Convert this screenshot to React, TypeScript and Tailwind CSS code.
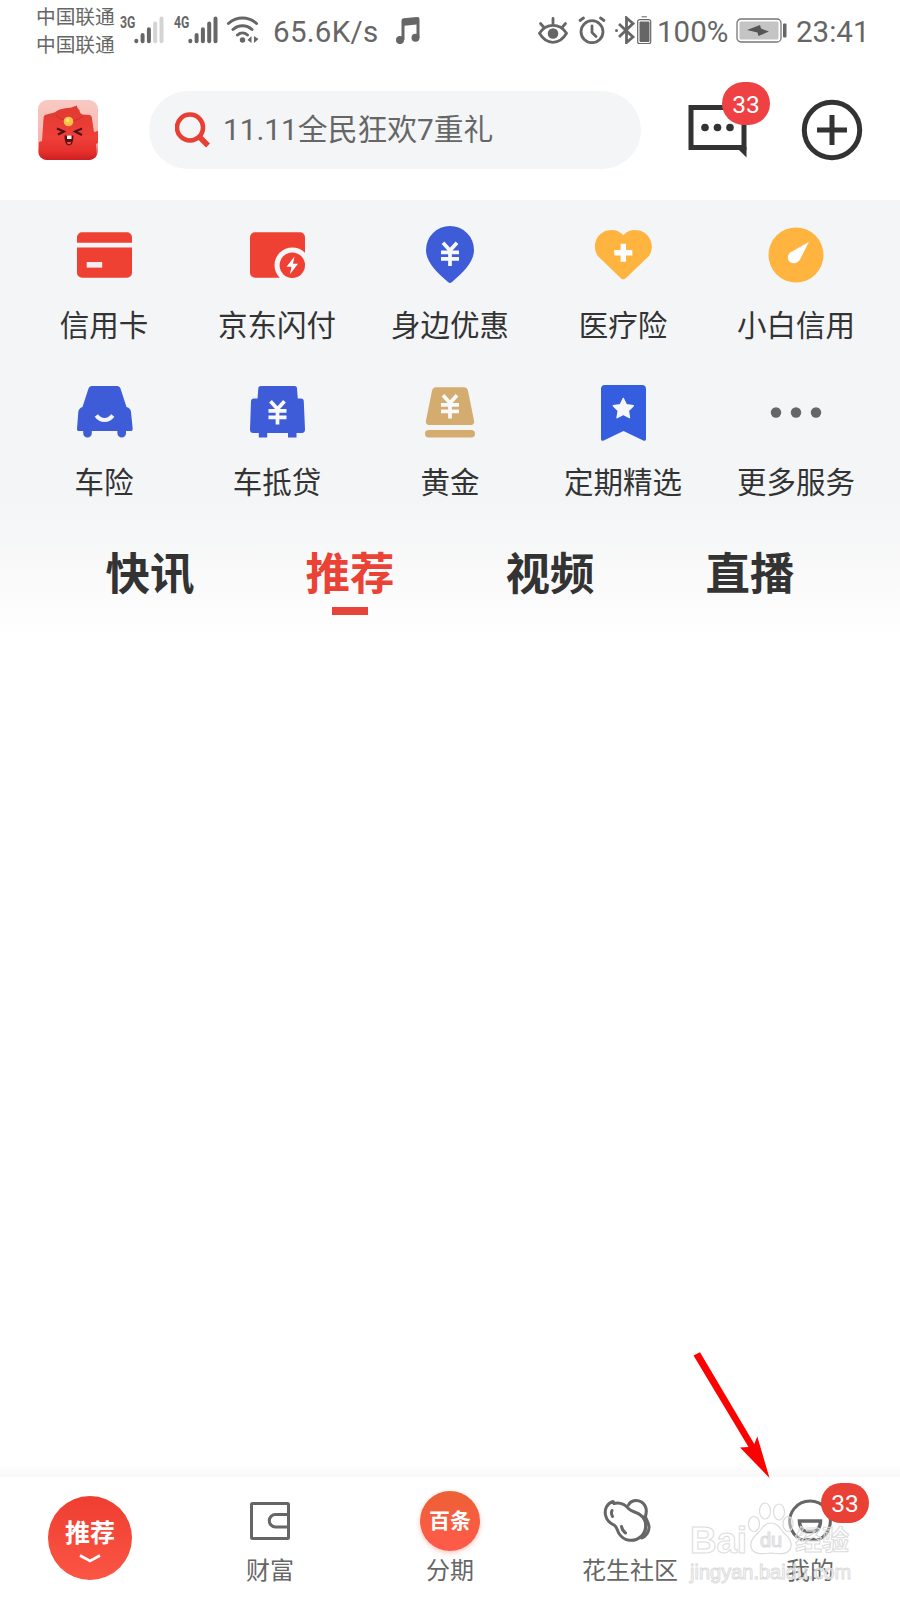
import type { ReactNode } from 'react';

interface ServiceItem {
  label: string;
  icon: ReactNode;
}

function Yen({ x, y }: { x: number; y: number }) {
  return (
    <g transform={`translate(${x} ${y})`} stroke="#f8f9fd" strokeWidth="3.7" fill="none">
      <path d="M2 1.2 9 9 16 1.2M0 10.8h18M0 17.3h18M9 9v15.500" />
    </g>
  );
}

function IconBox({ children }: { children: ReactNode }) {
  return (
    <svg viewBox="0 0 60 60" className="block h-[60px] w-[60px] shrink-0">
      {children}
    </svg>
  );
}

const SERVICES: ServiceItem[] = [
  {
    label: '信用卡',
    icon: (
      <IconBox>
        <path d="M3 17.7V12a5 5 0 0 1 5-4.7h45a5 5 0 0 1 5 4.7v5.7zM3 22.5h55v25.3a5 5 0 0 1-5 5H8a5 5 0 0 1-5-5z" fill="#ef4034" />
        <rect x="12.7" y="37" width="15.5" height="5.6" fill="#f5eeee" />
      </IconBox>
    ),
  },
  {
    label: '京东闪付',
    icon: (
      <IconBox>
        <path d="M8 7.3h45a5 5 0 0 1 5 5v15.400A17.600 17.600 0 0 0 32.700 52.800H8a5 5 0 0 1-5-5V12.300a5 5 0 0 1 5-5z" fill="#ef4034" />
        <circle cx="45.3" cy="40.200" r="12.700" fill="#ef4034" />
        <path d="M47.500 31.500 39.500 41.800h5l-1.500 7.500 8-10.600h-5z" fill="#fff" />
      </IconBox>
    ),
  },
  {
    label: '身边优惠',
    icon: (
      <IconBox>
        <path d="M30 1a24 24 0 0 1 24 24c0 11-9 21-22.300 32.300a2.500 2.500 0 0 1-3.400 0C15 46 6 36 6 25A24 24 0 0 1 30 1z" fill="#3e5bd8" />
        <Yen x={21} y={16.500} />
      </IconBox>
    ),
  },
  {
    label: '医疗险',
    icon: (
      <IconBox>
        <path d="M30.300 10.300C35 4.600 44 3.500 51 7.500c8 5 10.300 15.500 5 23.500L33 53a4 4 0 0 1-5.400 0L4.800 31C-.5 23 1.600 12.500 9.600 7.500c7-4 16-2.900 20.700 2.800z" fill="#ffb440" />
        <path d="M30.300 18.700v18M21.300 27.700h18" stroke="#fff" strokeWidth="5.400" />
      </IconBox>
    ),
  },
  {
    label: '小白信用',
    icon: (
      <IconBox>
        <circle cx="30" cy="30" r="27.500" fill="#ffb440" />
        <path d="M42.800 17 34 34.500c-2 3.500-6.500 5-9.800 2.700-3.200-2.500-3.200-7 0-9.700z" fill="#fff" />
      </IconBox>
    ),
  },
  {
    label: '车险',
    icon: (
      <IconBox>
        <path d="M18 4h25c1.700 0 2.900 1 3.500 2.600L52.500 25c3 1 4.300 2.500 4.500 5l1.700 16.800c0 1.500-.8 2.300-2.200 2.300H52v2.200a4.200 4.200 0 0 1-8.600 0v-2.200H17.800v2.200a4.200 4.200 0 0 1-8.600 0v-2.200H5c-1.400 0-2.100-.8-2-2.300L4.300 30c.2-2.500 1.700-4 4.200-5l6-18.400C15.100 5 16.300 4 18 4z" fill="#3e5bd8" />
        <path d="M22.300 33.500c4.500 6 12 6 16.500 0" fill="none" stroke="#f4f6fb" strokeWidth="4" />
      </IconBox>
    ),
  },
  {
    label: '车抵贷',
    icon: (
      <IconBox>
        <path d="M13.800 4h33.700a2.500 2.500 0 0 1 2.500 2.500l.8 10h3a3 3 0 0 1 3 3L58 47.500a3.500 3.500 0 0 1-3.500 3.500H49.500v4.600H41V51H20.200v4.600h-8.400V51H6.600A3.500 3.500 0 0 1 3 47.500l1-28a3 3 0 0 1 3-3h3.500l.8-10A2.500 2.500 0 0 1 13.800 4z" fill="#3e5bd8" />
        <Yen x={21.500} y={18} />
      </IconBox>
    ),
  },
  {
    label: '黄金',
    icon: (
      <IconBox>
        <path d="M16.500 5.300h27c2.700 0 4 1.300 4.600 4L54 38.500c.6 3-.9 4.600-3.800 4.600H9.800C6.900 43.100 5.400 41.500 6 38.500L11.900 9.300c.6-2.700 1.900-4 4.600-4z" fill="#d5ac70" />
        <rect x="5" y="48" width="50" height="7.500" rx="3.750" fill="#d5ac70" />
        <Yen x={21} y={12} />
      </IconBox>
    ),
  },
  {
    label: '定期精选',
    icon: (
      <IconBox>
        <path d="M12 3h37a4 4 0 0 1 4 4v50c0 1.500-1.200 2.200-2.700 1.500L30.500 49 10.700 58.500C9.200 59.200 8 58.500 8 57V7a4 4 0 0 1 4-4z" fill="#345ddf" />
        <path d="m30.300 16.500 3 6.300 7 1-5 4.800 1.200 7-6.200-3.300-6.200 3.300 1.200-7-5-4.800 7-1z" fill="#f5f7fc" stroke="#f5f7fc" strokeWidth="1.500" strokeLinejoin="round" />
      </IconBox>
    ),
  },
  {
    label: '更多服务',
    icon: (
      <IconBox>
        <g fill="#666">
          <circle cx="10" cy="30.500" r="5.200" />
          <circle cx="30" cy="30.500" r="5.200" />
          <circle cx="50" cy="30.500" r="5.200" />
        </g>
      </IconBox>
    ),
  },
];

const TABS = ['快讯', '推荐', '视频', '直播'];

function Signal({ label, weak }: { label: string; weak?: boolean }) {
  const faded = weak ? '#d4d4d4' : '#666';
  return (
    <div className="flex h-7 w-[45px]">
      <span className="w-[14px] origin-left scale-x-[0.72] font-['Roboto',sans-serif] text-[17px] leading-[13px] font-bold">{label}</span>
      <svg viewBox="0 0 30 28" className="h-7 w-[30px] shrink-0" strokeWidth="4" strokeLinecap="round">
        <path d="M2.300 24.800v.4M8.600 19v6.200M14.900 13.200v12" stroke="#666" />
        <path d="M21.200 7.500v17.700M27.500 2.500v22.700" stroke={faded} />
      </svg>
    </div>
  );
}

function StatusBar() {
  return (
    <div className="flex h-16 items-start pl-9 pr-[31px] text-[#666]">
      <div className="w-[84px] pt-[4px] text-[19.700px] leading-[27.500px] whitespace-nowrap">
        <div>中国联通</div>
        <div>中国联通</div>
      </div>
      <div className="flex pt-[16px]">
        <Signal label="3G" weak />
        <div className="ml-[9px]">
          <Signal label="4G" />
        </div>
        <svg viewBox="0 0 34 28" className="ml-[7px] h-7 w-[34px]" fill="none" stroke="#666" strokeWidth="3" strokeLinecap="round">
          <path d="M2.500 7.500C10.500.300 22.500.300 30.500 7.500M7 13.500c5.500-5 13.500-5 19 0M11.500 19c3-2.700 7-2.700 10 0" />
          <circle cx="16.500" cy="24" r="2.700" fill="#666" stroke="none" />
          <path d="M25.500 20v7l-4-3zM28 20v7l4.500-4z" fill="#666" stroke="none" />
        </svg>
      </div>
      <span className="ml-[13px] font-['Roboto',sans-serif] text-[29.500px] leading-[64px] tracking-[0.300px]">65.6K/s</span>
      <svg viewBox="0 0 26 28" className="mt-[16px] ml-[16px] h-7 w-[26px]" fill="#666">
        <path d="M6.500 4.500q0-2 2-2.200L22 1q2.500-.2 2.500 2v19h-3V8.500L9.500 9.800V24h-3z" />
        <circle cx="5" cy="24" r="4" />
        <circle cx="20.500" cy="21.800" r="4" />
      </svg>

      <div className="ml-auto flex">
        <svg viewBox="0 0 30 28" className="mt-[16px] h-7 w-[30px]" fill="none" stroke="#666" strokeWidth="2.800" strokeLinecap="round">
          <path d="M1.500 17.300c7-10.500 20-10.500 27 0-7 12-20 12-27 0z" />
          <circle cx="15" cy="17.500" r="5.300" fill="#666" stroke="none" />
          <path d="M15 2.500v5M2.500 7.500l3.500 4M27.500 7.500l-3.500 4" />
        </svg>
        <svg viewBox="0 0 28 28" className="mt-[16px] ml-[10px] h-7 w-7" fill="none" stroke="#666" strokeWidth="2.800" strokeLinecap="round">
          <circle cx="14" cy="15.700" r="11" />
          <path d="M14 10v6.500l4 4M2 4.500 5.500 2M26 4.500 22.500 2" />
        </svg>
        <svg viewBox="0 0 37 28" className="mt-[16px] ml-[9px] h-7 w-[37px]">
          <path d="m4 8 14 13-6.500 5.500V2L18 7.500 4 21" fill="none" stroke="#666" strokeWidth="2.800" />
          <circle cx="1.500" cy="14.500" r="1.500" fill="#666" />
          <rect x="22.700" y="3.700" width="13" height="24" rx="2" fill="none" stroke="#666" strokeWidth="1.200" />
          <path d="M26.500.8h5.500M25 6h9v19.500h-9z" fill="#666" stroke="#666" strokeWidth="1" />
        </svg>
        <span className="ml-[5px] w-[74px] font-['Roboto',sans-serif] text-[29.500px] leading-[64px]">100%</span>
        <svg viewBox="0 0 52 26" className="mt-[18px] ml-[5px] h-[26px] w-[52px]">
          <rect x="1" y="1" width="44" height="23" rx="4" fill="#fff" stroke="#777" strokeWidth="1.300" />
          <rect x="3.500" y="3.500" width="39" height="18" rx="1.500" fill="#c4c4c4" />
          <rect x="47" y="5.500" width="3.500" height="14" rx="1" fill="#666" />
          <path d="M11 12 24 7l1 3.500 8 3L22.500 18l-1-3.500z" fill="#555" />
        </svg>
        <span className="ml-[8px] w-[73px] font-['Roboto',sans-serif] text-[29.500px] leading-[64px]">23:41</span>
      </div>
    </div>
  );
}

function Avatar() {
  return (
    <svg viewBox="0 0 60 60" className="h-[60px] w-[60px] rounded-[9px]">
      <defs>
        <linearGradient id="avatarBg" x1="0" y1="0" x2="0" y2="1">
          <stop offset="0" stopColor="#f9c9c3" />
          <stop offset="0.700" stopColor="#f6b5af" />
          <stop offset="1" stopColor="#dc4a46" />
        </linearGradient>
        <linearGradient id="avatarBody" x1="0" y1="0" x2="0" y2="1">
          <stop offset="0" stopColor="#e03a31" />
          <stop offset="0.600" stopColor="#ee3f38" />
          <stop offset="0.850" stopColor="#e6302c" />
          <stop offset="1" stopColor="#cb1e22" />
        </linearGradient>
      </defs>
      <rect width="60" height="60" fill="url(#avatarBg)" />
      <path d="M1 60V42l3-1 1.500-22c0-3 1-4 3-4.500l8-2c5-4 12-4.500 17-5l5.500-2c0 2 .5 3 2.500 4.500 0 2 1 3.500 3 4.500l7 .5c2 .5 2.500 2 2.500 4L56 32l4-1v12l-2 1 1 16z" fill="url(#avatarBody)" />
      <path d="M18 15c5 7 20 8 27 1" fill="none" stroke="#c9302a" strokeWidth="1" />
      <circle cx="30.500" cy="21.500" r="4.800" fill="#ffc247" />
      <circle cx="29.500" cy="20" r="2" fill="#ffe07a" />
      <path d="m19 28.500 7 3-6 3M44 28.500l-7 3 7 3.500" fill="none" stroke="#4c1018" strokeWidth="2" />
      <path d="M26.500 35.500h9c0 6-1.500 10-4.500 10s-4.500-4-4.500-10z" fill="#5b1118" />
      <path d="M29 35.500h4.500v3.500H29z" fill="#fff" />
      <path d="M29 42h4c0 3-4 3-4 0z" fill="#ef5a3f" />
    </svg>
  );
}

function Header() {
  return (
    <header className="flex h-[136px] items-start pl-[37.500px]">
      <div className="pt-[36px]">
        <Avatar />
      </div>
      <div className="mt-[27px] ml-[51.500px] flex h-[78px] w-[492px] items-center rounded-full bg-[#f3f5f7] pl-[26px]">
        <svg viewBox="0 0 36 36" className="h-9 w-9 shrink-0" fill="none" stroke="#e83f35">
          <circle cx="15" cy="15.500" r="13" strokeWidth="4.600" />
          <path d="m24.500 25 8.500 8.500" strokeWidth="5.500" />
        </svg>
        <span className="ml-[12px] text-[29.800px] leading-[40px] whitespace-nowrap text-[#666]">11.11全民狂欢7重礼</span>
      </div>
      <div className="relative mt-[41px] ml-[47px] h-[54px] w-[60px]">
        <svg viewBox="0 0 60 54" className="h-[54px] w-[60px]">
          <path d="M3 2.500h53v40H3z" fill="none" stroke="#333" strokeWidth="5" />
          <path d="M48 42h10.500v10.500z" fill="#333" />
          <g fill="#333">
            <circle cx="17" cy="22.500" r="3.800" />
            <circle cx="29.500" cy="22.500" r="3.800" />
            <circle cx="42" cy="22.500" r="3.800" />
          </g>
        </svg>
        <span className="absolute -top-[23px] left-[34px] h-[43px] w-[48px] rounded-[22px] bg-[#ef4044] text-center font-['Roboto',sans-serif] text-[24.500px] leading-[45px] text-white">33</span>
      </div>
      <svg viewBox="0 0 62 62" className="mt-[35px] ml-[53px] h-[62px] w-[62px]" fill="none" stroke="#333" strokeWidth="5">
        <circle cx="31" cy="31" r="27.700" />
        <path d="M31 16v30M16 31h30" />
      </svg>
    </header>
  );
}

function Services() {
  return (
    <section className="grid h-[302px] grid-cols-[repeat(5,173px)] grid-rows-[121px_121px] content-start justify-center gap-y-[36px] bg-[#f3f5f7] pt-[25px]">
      {SERVICES.map(({ label, icon }) => (
        <div key={label} className="flex flex-col items-center gap-[21px]">
          {icon}
          <span className="text-[29.500px] leading-[40px] whitespace-nowrap text-[#333]">{label}</span>
        </div>
      ))}
    </section>
  );
}

function FeedTabs() {
  return (
    <nav className="grid h-[138px] grid-cols-4 bg-linear-to-b from-[#f3f5f7] via-[#f9f9f9] to-white px-[50px] pt-[43px]">
      {TABS.map((tab) => {
        const active = tab === '推荐';
        return (
          <div key={tab} className="flex flex-col items-center">
            <span className={active ? 'text-[44.500px] leading-[60px] font-bold text-[#ea4335]' : 'text-[44.500px] leading-[60px] font-bold text-[#333]'}>
              {tab}
            </span>
            {active && <span className="mt-[2px] h-2 w-9 bg-[#e84338]" />}
          </div>
        );
      })}
    </nav>
  );
}

function Watermark() {
  return (
    <div className="pointer-events-none absolute top-[19px] left-[690px] h-[100px] w-[170px] text-white/30 [-webkit-text-stroke:1px_#dcdcdc]">
      <div className="flex h-[62px] items-end justify-between pr-[11px] leading-[34px] font-bold">
        <span className="font-['Liberation_Sans',sans-serif] text-[37px] tracking-[-0.300px]">Bai</span>
        <svg viewBox="0 0 46 54" className="mb-[3px] h-[54px] w-[46px] shrink-0" fill="#ffffff66" stroke="#dcdcdc" strokeWidth="1.200">
          <ellipse cx="6" cy="23" rx="5.500" ry="7.500" />
          <ellipse cx="17" cy="10" rx="5.500" ry="8" />
          <ellipse cx="31" cy="11" rx="5.500" ry="8" />
          <ellipse cx="40" cy="23" rx="5" ry="7.500" />
          <path d="M23 22c7 0 9 6 13 10 6 5 8 9 7 14-2 8-11 7-20 6-9 1-18 2-20-6-1-5 1-9 7-14 4-4 6-10 13-10z" />
          <text x="12" y="46" fontFamily="Liberation Sans, sans-serif" fontSize="20" fontWeight="400">du</text>
        </svg>
        <span className="text-[27px]">经验</span>
      </div>
      <div className="mt-px font-['Liberation_Sans',sans-serif] text-[20px] leading-[26px] whitespace-nowrap">jingyan.baidu.com</div>
    </div>
  );
}

function BottomNav() {
  return (
    <footer className="relative grid h-[123px] grid-cols-5 bg-white text-[24px] leading-[32px] text-[#666]">
      <div className="flex justify-center pt-[18.500px]">
        <div className="flex h-[84px] w-[84px] flex-col items-center rounded-full bg-linear-to-b from-[#ee3e31] to-[#fb5544] pt-[21px] text-white">
          <span className="text-[25px] leading-[34px] font-bold">推荐</span>
          <svg viewBox="0 0 22 9" className="mt-[3px] h-[9px] w-[22px]" fill="none" stroke="#fff" strokeWidth="2.600">
            <path d="m1 1.500 10 5.500 10-5.500" />
          </svg>
        </div>
      </div>
      <div className="flex flex-col items-center">
        <svg viewBox="0 0 40 38" className="mt-[25px] h-[38px] w-10" fill="none" stroke="#666" strokeWidth="3">
          <rect x="1.500" y="1.500" width="37" height="35" rx="1" />
          <path d="M38 12.500H25.500a6.200 6.200 0 0 0 0 12.500H38" />
        </svg>
        <span className="mt-[15px]">财富</span>
      </div>
      <div className="flex flex-col items-center">
        <div className="mt-[14px] h-[60px] w-[60px] rounded-full bg-linear-to-b from-[#ed6034] to-[#ff5a4a] text-center text-[21px] leading-[61px] font-bold text-white shadow-[0_2px_5px_#ff5a4a55]">百条</div>
        <span className="mt-[4px]">分期</span>
      </div>
      <div className="flex flex-col items-center">
        <svg viewBox="0 0 48 46" className="mt-[20px] mr-[7px] h-[46px] w-[48px]" fill="none" stroke="#666" strokeWidth="3" strokeLinecap="round" strokeLinejoin="round">
          <path d="M10 4.500C4 6.500 1.300 12 2.500 18c1 5 4 8 8.500 10 3 1.500 3 5 5 8.500 5 8 15 9 22 3 7-6.500 6-16 0-21-4-3.500-9-3.500-12-6.500-4-4.500-9-7-15-5.500z" />
          <path d="M25.500 8c2-4.500 8-6 13-3 5 3.500 5.500 9 4 14 0 3 3 5.500 3.500 10.500.4 5-3 10-7.500 11.500" />
          <path d="M9 13.500c-.8 2-.7 4 .5 6M18.500 29.500c.5 3 2 5 4 6.500M41 20c2.500 6 2 13-1 18" />
        </svg>
        <span className="mt-[12px]">花生社区</span>
      </div>
      <div className="relative flex flex-col items-center">
        <svg viewBox="0 0 46 46" className="mt-[21px] h-[46px] w-[46px]" fill="none" stroke="#666" strokeWidth="3">
          <path d="M14 41.500a20.300 20.300 0 1 1 18 0z" strokeLinejoin="round" />
          <path d="M12.500 23h21c0 6-3.500 10.500-7 10.500h-7c-3.500 0-7-4.500-7-10.500z" strokeWidth="3.500" />
        </svg>
        <span className="mt-[11px]">我的</span>
        <span className="absolute top-[5.500px] left-[101px] h-[40px] w-[48px] rounded-[20px] bg-[#ea4136] text-center font-['Roboto',sans-serif] text-[24.500px] leading-[42px] text-white">33</span>
      </div>
      <Watermark />
    </footer>
  );
}

export default function App() {
  return (
    <div className="relative flex h-[1600px] w-[900px] flex-col overflow-hidden bg-white font-['Roboto','Noto_Sans_CJK_SC',sans-serif]">
      <StatusBar />
      <Header />
      <Services />
      <FeedTabs />
      <main className="flex-1" />
      <div className="h-[12px] bg-linear-to-b from-white to-[#f8f8f8]" />
      <BottomNav />

      {/* 指向「我的」的箭头 */}
      <svg viewBox="0 0 80 128" className="absolute top-[1352px] left-[692px] h-[128px] w-[80px]" fill="#fd0000">
        <path d="M1.500 3.500 8 .300 62.300 92l3-7.500L77.500 126 48 95.500l8.500-.5z" />
      </svg>
    </div>
  );
}
